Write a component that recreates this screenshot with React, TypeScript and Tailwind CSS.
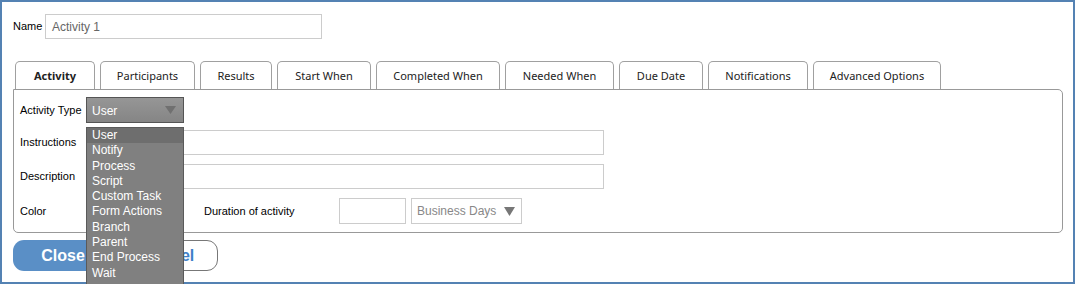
import React from "react";

const tabs = [
  { label: "Activity", w: "w-[80px]", active: true },
  { label: "Participants", w: "w-[95px]" },
  { label: "Results", w: "w-[72px]" },
  { label: "Start When", w: "w-[94px]" },
  { label: "Completed When", w: "w-[124px]" },
  { label: "Needed When", w: "w-[109px]" },
  { label: "Due Date", w: "w-[84px]" },
  { label: "Notifications", w: "w-[100px]" },
  { label: "Advanced Options", w: "w-[128px]" },
];

const items = [
  "User",
  "Notify",
  "Process",
  "Script",
  "Custom Task",
  "Form Actions",
  "Branch",
  "Parent",
  "End Process",
  "Wait",
];

export default function App() {
  return (
    <div className="w-[1075px] h-[284px] bg-white border-2 border-[#5482b3] pl-[11px] pt-[12px] font-['Liberation_Sans',Arial,sans-serif] text-[#000]">
      {/* Name row */}
      <div className="flex items-center h-[25px]">
        <span className="text-[11px] w-[32px]">Name</span>
        <div className="w-[277px] h-[25px] border border-[#cccccc] flex items-center pl-[6px] text-[12px] text-[#666]">
          Activity 1
        </div>
      </div>

      {/* Tabs */}
      <div className="flex gap-[5px] mt-[22px] pl-[2px] h-[28px] font-['Noto_Sans','Open_Sans',sans-serif]">
        {tabs.map((t) => (
          <div
            key={t.label}
            className={`${t.w} h-[28px] pt-[2px] border border-b-0 border-[#a0a0a0] rounded-t-[5px] flex items-center justify-center text-[11px] text-[#222] ${t.active ? "font-bold" : ""}`}
          >
            {t.label}
          </div>
        ))}
      </div>

      {/* Panel */}
      <div className="w-[1050px] h-[144px] border border-[#999] rounded-b-[5px] rounded-tr-[5px] pl-[6px] pt-[7px]">
        {/* Activity Type */}
        <div className="flex items-center h-[26px]">
          <span className="text-[11px] w-[66px]">Activity Type</span>
          <div className="relative">
            <div className="w-[98px] h-[26px] pt-[1px] border border-[#555] bg-gradient-to-b from-[#969696] to-[#858585] flex items-center pl-[5px] text-[12px] text-white">
              User
              <svg className="absolute right-[8px] top-[9px]" width="11" height="8" viewBox="0 0 11 8">
                <path d="M0 0 L11 0 L5.5 8 Z" fill="#707070" />
              </svg>
            </div>
            <div className="absolute left-0 top-[30px] z-10 w-[98px] h-[160px] bg-[#808080] border border-[#5a5a5a] text-[12px] text-white">
              {items.map((it, i) => (
                <div
                  key={it}
                  className={`h-[15.3px] leading-[15.3px] pl-[5px] ${i === 0 ? "bg-[#6e6e6e]" : ""}`}
                >
                  {it}
                </div>
              ))}
            </div>
          </div>
        </div>

        {/* Instructions */}
        <div className="flex items-center h-[25px] mt-[7px]">
          <span className="text-[11px] w-[66px]">Instructions</span>
          <div className="w-[518px] h-[25px] border border-[#cccccc]" />
        </div>

        {/* Description */}
        <div className="flex items-center h-[25px] mt-[9px]">
          <span className="text-[11px] w-[66px]">Description</span>
          <div className="w-[518px] h-[25px] border border-[#cccccc]" />
        </div>

        {/* Color / Duration */}
        <div className="flex items-center h-[26px] mt-[9px]">
          <span className="text-[11px] w-[66px]">Color</span>
          <div className="w-[118px]" />
          <span className="text-[11px] w-[135px]">Duration of activity</span>
          <div className="w-[67px] h-[26px] border border-[#cccccc]" />
          <div className="ml-[5px] w-[111px] h-[26px] border border-[#cccccc] flex items-center pl-[5px] text-[12px] text-[#888]">
            <span>Business Days</span>
            <svg className="ml-[8px]" width="11" height="9" viewBox="0 0 11 9">
              <path d="M0 0 L11 0 L5.5 9 Z" fill="#777" />
            </svg>
          </div>
        </div>
      </div>

      {/* Buttons */}
      <div className="flex gap-[5px] mt-[7px]">
        <button className="w-[100px] h-[31px] rounded-[11px] bg-[#5a8fc6] text-white text-[16px] font-bold">
          Close
        </button>
        <button className="w-[100px] h-[31px] rounded-[11px] bg-white border border-[#777] text-[#3d80c8] text-[16px] font-bold">
          Cancel
        </button>
      </div>
    </div>
  );
}
